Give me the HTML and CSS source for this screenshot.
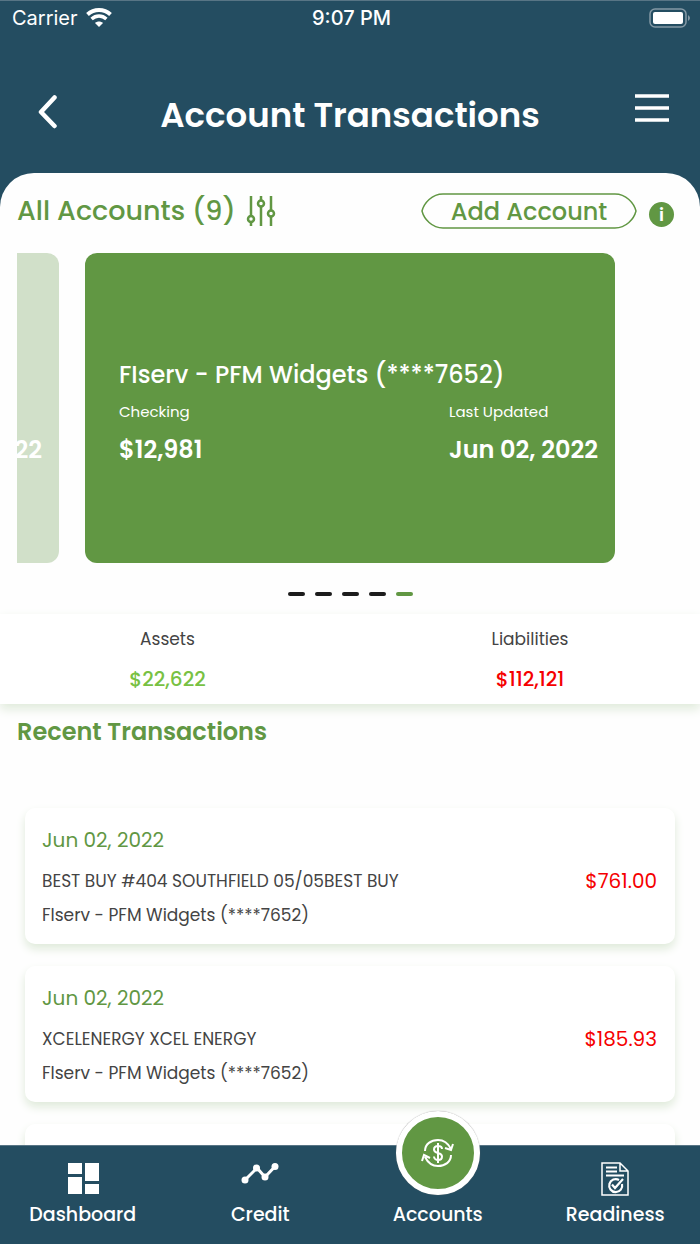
FILE: index.html
```html
<!DOCTYPE html>
<html lang="en">
<head>
<meta charset="utf-8">
<meta name="viewport" content="width=device-width, initial-scale=1">
<title>Account Transactions</title>
<link rel="stylesheet" href="styles.css">
</head>
<body>
<div class="app">
  <header class="top">
    <div class="status">
      <div class="carrier"><span>Carrier</span>
        <svg width="26" height="20" viewBox="0 0 26 20" fill="none" stroke="#fff" aria-hidden="true"><path d="M1.5 6.500C8 .6 18 .6 24.500 6.500" stroke-width="4"/><path d="M5.600 11C10 7 16 7 20.400 11" stroke-width="3.500"/><path d="M13 19l-4-4c2.200-2 5.800-2 8 0z" fill="#fff" stroke="none"/></svg>
      </div>
      <time class="clock">9:07 PM</time>
      <svg class="battery" width="42" height="20" viewBox="0 0 42 20" aria-hidden="true"><rect x="1" y="1" width="36" height="18" rx="5" fill="none" stroke="#8499a5" stroke-width="1.500"/><rect x="4" y="4" width="30" height="12" rx="2" fill="#fff"/><path d="M39 7q4 3 0 6z" fill="#8499a5"/></svg>
    </div>
    <div class="titlebar">
      <button class="icon-button" aria-label="Back"><svg width="20" height="34" viewBox="0 0 20 34"><path d="M16.500 2.500L3 17l13.500 14" fill="none" stroke="#fff" stroke-width="4.500" stroke-linecap="round" stroke-linejoin="round"/></svg></button>
      <h1>Account Transactions</h1>
      <button class="icon-button menu" aria-label="Menu"><svg width="36" height="30" viewBox="0 0 36 30"><path d="M1 3h34M1 15h34M1 27h34" stroke="#fff" stroke-width="3.500"/></svg></button>
    </div>
  </header>
  <main class="sheet">
    <section class="account-bar">
      <h2>All Accounts (9)</h2>
      <button class="icon-button" aria-label="Filter accounts"><svg width="30" height="32" viewBox="0 0 30 32" fill="none" stroke="#619743" stroke-width="2.500"><path d="M5 1v20M5 28v3M15 1v4M15 12v19M25 1v14M25 22v9"/><circle cx="5" cy="24" r="3"/><circle cx="15" cy="8.500" r="3"/><circle cx="25" cy="18.500" r="3"/></svg></button>
      <button class="add-account"><svg class="add-outline" viewBox="0 0 216 36" preserveAspectRatio="none" aria-hidden="true"><path d="M22 1H194C205 1 213 10 215 18C213 26 205 35 194 35H22C11 35 3 26 1 18C3 10 11 1 22 1Z" fill="none" stroke="#619743" stroke-width="1.500"/></svg>Add Account</button>
      <button class="info" aria-label="Account information">i</button>
    </section>
    <section class="carousel" aria-label="Accounts">
      <div class="previous"><strong>Jun 02, 2022</strong></div>
      <article class="account">
        <h3>FIserv - PFM Widgets (****7652)</h3>
        <div class="details">
          <div><span>Checking</span><strong>$12,981</strong></div>
          <div><span>Last Updated</span><strong>Jun 02, 2022</strong></div>
        </div>
      </article>
    </section>
    <div class="pages" aria-hidden="true"><i></i><i></i><i></i><i></i><i class="current"></i></div>
    <section class="totals">
      <div><span>Assets</span><strong class="assets">$22,622</strong></div>
      <div><span>Liabilities</span><strong class="liabilities">$112,121</strong></div>
    </section>
    <section class="recent">
      <h2>Recent Transactions</h2>
      <article class="transaction">
        <div><time>Jun 02, 2022</time><p>BEST BUY #404 SOUTHFIELD 05/05BEST BUY</p><p>FIserv - PFM Widgets (****7652)</p></div>
        <span class="amount">$761.00</span>
      </article>
      <article class="transaction">
        <div><time>Jun 02, 2022</time><p>XCELENERGY XCEL ENERGY</p><p>FIserv - PFM Widgets (****7652)</p></div>
        <span class="amount">$185.93</span>
      </article>
      <article class="transaction"></article>
    </section>
  </main>
  <nav class="tabs">
    <a href="#dashboard"><span class="tab-icon"><svg width="32" height="32" viewBox="0 0 32 32" fill="#fff"><path d="M1 0h14v11H1zM18 0h14v18H18zM1 14h14v17H1zM18 21h14v10H18z"/></svg></span>Dashboard</a>
    <a href="#credit"><span class="tab-icon"><svg width="38" height="32" viewBox="0 0 38 32" fill="#fff"><path d="M4 17L16 5l8 9L34 3.500" fill="none" stroke="#fff" stroke-width="3"/><circle cx="4" cy="17" r="3.500"/><circle cx="15.500" cy="5" r="3.500"/><circle cx="24" cy="14" r="3.500"/><circle cx="34" cy="3.500" r="3.500"/></svg></span>Credit</a>
    <a href="#accounts"><span class="tab-icon"></span><span class="bubble"><svg width="34" height="32" viewBox="0 0 34 32" fill="none" stroke="#fff" stroke-width="2"><path d="M4 14C4 7 10 3 17 3c6 0 10 3 13 9M24 11l6 2 2-6M30 18c0 7-6 11-13 11-6 0-10-3-13-9M1 24l2-6 6 3"/><path d="M17 6v20M21 12c0-2-2-3-4-3s-4 1-4 3.500 2 3 4 3.500 4 1 4 3.500-2 3.500-4 3.500-4-1.500-4-3.500"/></svg></span>Accounts</a>
    <a href="#readiness"><span class="tab-icon"><svg width="28" height="34" viewBox="0 0 28 34" fill="none" stroke="#fff"><path d="M1 1h18l8 8v24H1zM19 1v8h8" stroke-width="1.500"/><path d="M5 5.500h11M5 9.500h11M5 13.500h18" stroke-width="2"/><path d="M18 18a6.500 6.500 0 1 0 3 4M11 22.500l3 3.500 8-9" stroke-width="2.200"/></svg></span>Readiness</a>
  </nav>
</div>
</body>
</html>
```
FILE: styles.css
```css
* { box-sizing: border-box; }
body {
  margin: 0;
  overflow: hidden;
  background: #244d61;
  color: #444;
  font-family: Poppins, Inter, "Noto Sans", sans-serif;
}
h1, h2, h3, p { margin: 0; }
button { padding: 0; border: 0; background: none; color: inherit; font: inherit; }
svg { display: block; }
.app { display: flex; flex-direction: column; height: 100vh; }

.top { flex: none; color: #fff; border-top: 1px solid #587585; }
.status {
  display: grid;
  grid-template-columns: 1fr auto 1fr;
  align-items: center;
  height: 34px;
  padding: 0 9px 0 12px;
  font-family: Inter, "Noto Sans", sans-serif;
  font-size: 20px;
}
.carrier { display: flex; align-items: center; gap: 8px; }
.clock { font-weight: 500; }
.battery { justify-self: end; }
.titlebar {
  display: grid;
  grid-template-columns: 36px 1fr 36px;
  align-items: center;
  height: 138px;
  padding: 22px 30px 0;
}
.titlebar .icon-button { justify-self: center; padding-bottom: 6px; }
.titlebar .menu { padding-bottom: 14px; }
.titlebar h1 { font-size: 34px; line-height: 48px; font-weight: 600; text-align: center; }

.sheet {
  flex: 1;
  min-height: 0;
  overflow: hidden;
  background: #fefefe;
  border-radius: 34px 34px 0 0;
}
.account-bar {
  display: flex;
  align-items: center;
  height: 80px;
  padding: 0 26px 4px 17px;
  color: #619743;
}
.account-bar h2 { margin-right: 10px; font-size: 27px; font-weight: 500; }
.add-account {
  position: relative;
  width: 216px;
  height: 36px;
  margin: 0 12px 0 auto;
  font-size: 24px;
  font-weight: 500;
}
.add-outline { position: absolute; inset: 0; width: 100%; height: 100%; }
.info {
  width: 25px;
  height: 25px;
  margin-top: 6px;
  border-radius: 50%;
  background: #619743;
  color: #fff;
  font-size: 18px;
  font-weight: 600;
  line-height: 25px;
}

.carousel {
  display: grid;
  grid-template-columns: 42px 1fr 42px;
  gap: 26px;
  height: 310px;
  margin: 0 17px;
}
.carousel strong { font-size: 24px; line-height: 36px; font-weight: 600; white-space: nowrap; }
.previous {
  display: flex;
  justify-content: flex-end;
  overflow: hidden;
  padding: 179px 17px 0 0;
  border-radius: 0 12px 12px 0;
  background: #d1e0c9;
  color: #fff;
}
.account { padding: 104px 17px 0 34px; border-radius: 12px; background: #619743; color: #fff; }
.account h3 { font-size: 24px; line-height: 36px; font-weight: 500; white-space: nowrap; }
.details { display: flex; justify-content: space-between; padding-top: 7px; }
.details div { display: flex; flex-direction: column; gap: 8px; }
.details span { font-size: 15px; line-height: 24px; }
.pages { display: flex; justify-content: center; gap: 10px; padding: 29px 0 18px; }
.pages i { width: 17px; height: 4px; border-radius: 2px; background: #1c1c1c; }
.pages .current { background: #619743; }

.totals {
  display: grid;
  grid-template-columns: 1fr 1fr;
  height: 90px;
  padding: 12px 0 0;
  background: #fff;
  box-shadow: 0 5px 10px #dfeada;
  text-align: center;
}
.totals div { display: flex; flex-direction: column; gap: 12px; }
.totals div:first-child { padding-right: 15px; }
.totals div:last-child { padding-left: 10px; }
.totals span { font-size: 17px; line-height: 26px; }
.totals strong { font-size: 20px; line-height: 30px; font-weight: 500; }
.assets { color: #78c143; }
.liabilities, .amount { color: #f50000; }

.recent h2 {
  padding: 10px 17px 58px;
  color: #619743;
  font-size: 24px;
  line-height: 36px;
  font-weight: 600;
}
.transaction {
  display: flex;
  align-items: center;
  justify-content: space-between;
  height: 136px;
  margin: 0 25px 22px;
  padding: 0 18px 0 17px;
  border-radius: 10px;
  background: #fff;
  box-shadow: 0 5px 10px #dfeada;
}
.transaction time { display: block; margin-bottom: 13px; color: #619743; font-size: 20px; line-height: 30px; }
.transaction p { font-size: 17px; line-height: 26px; }
.transaction p + p { margin-top: 8px; }
.amount { padding-top: 10px; font-size: 20px; line-height: 30px; }

.tabs {
  position: relative;
  flex: none;
  display: grid;
  grid-template-columns: repeat(4, 1fr);
  height: 99px;
  margin: 0 -4px 0 -6px;
  background: #244d61;
  border-top: 1px solid #587585;
}
.tabs a {
  position: relative;
  display: flex;
  flex-direction: column;
  align-items: center;
  gap: 4px;
  padding-top: 15px;
  color: #fff;
  font-size: 19px;
  line-height: 28px;
  font-weight: 500;
  text-decoration: none;
}
.tab-icon { display: flex; align-items: center; height: 36px; }
.bubble {
  position: absolute;
  top: -35px;
  left: calc(50% - 42px);
  display: grid;
  place-items: center;
  width: 84px;
  height: 84px;
  border: 6px solid #fff;
  border-radius: 50%;
  background: #619743;
  box-shadow: 0 0 1px #777;
}
```
